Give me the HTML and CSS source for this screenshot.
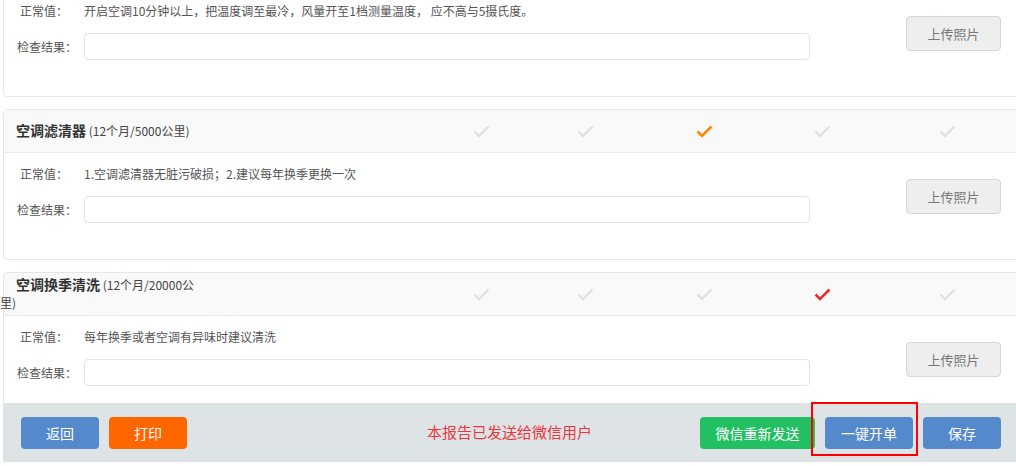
FILE: index.html
```html
<!DOCTYPE html>
<html lang="zh-CN">
<head>
    <meta charset="UTF-8">
    <meta name="viewport" content="width=device-width, initial-scale=1.0">
    <title>检查报告</title>
    <link rel="stylesheet" href="styles.css">
</head>
<body>
    <div class="page">
        <!-- 上一项，标题已滚出屏幕 -->
        <div class="panel panel-first">
            <div class="panel-body">
                <div class="fields">
                    <div class="row">
                        <span class="label label-norm">正常值：</span>
                        <span class="value">开启空调10分钟以上，把温度调至最冷，风量开至1档测量温度， 应不高与5摄氏度。</span>
                    </div>
                    <div class="row row-input">
                        <span class="label">检查结果：</span>
                        <input class="result" type="text">
                    </div>
                </div>
                <button class="upload-btn">上传照片</button>
            </div>
        </div>

        <div class="panel">
            <div class="panel-head">
                <div class="item-title"><b>空调滤清器</b> (12个月/5000公里)</div>
                <div class="checks">
                    <span class="check"><svg viewBox="0 0 17 13"><path d="M1.5 6.5 L6 11 L15.5 1.5"/></svg></span>
                    <span class="check"><svg viewBox="0 0 17 13"><path d="M1.5 6.5 L6 11 L15.5 1.5"/></svg></span>
                    <span class="check check-orange"><svg viewBox="0 0 17 13"><path d="M1.5 6.5 L6 11 L15.5 1.5"/></svg></span>
                    <span class="check"><svg viewBox="0 0 17 13"><path d="M1.5 6.5 L6 11 L15.5 1.5"/></svg></span>
                    <span class="check"><svg viewBox="0 0 17 13"><path d="M1.5 6.5 L6 11 L15.5 1.5"/></svg></span>
                </div>
            </div>
            <div class="panel-body">
                <div class="fields">
                    <div class="row">
                        <span class="label label-norm">正常值：</span>
                        <span class="value">1.空调滤清器无脏污破损；2.建议每年换季更换一次</span>
                    </div>
                    <div class="row row-input">
                        <span class="label">检查结果：</span>
                        <input class="result" type="text">
                    </div>
                </div>
                <button class="upload-btn">上传照片</button>
            </div>
        </div>

        <div class="panel">
            <div class="panel-head">
                <div class="item-title"><b>空调换季清洗</b> (12个月/20000公里)</div>
                <div class="checks">
                    <span class="check"><svg viewBox="0 0 17 13"><path d="M1.5 6.5 L6 11 L15.5 1.5"/></svg></span>
                    <span class="check"><svg viewBox="0 0 17 13"><path d="M1.5 6.5 L6 11 L15.5 1.5"/></svg></span>
                    <span class="check"><svg viewBox="0 0 17 13"><path d="M1.5 6.5 L6 11 L15.5 1.5"/></svg></span>
                    <span class="check check-red"><svg viewBox="0 0 17 13"><path d="M1.5 6.5 L6 11 L15.5 1.5"/></svg></span>
                    <span class="check"><svg viewBox="0 0 17 13"><path d="M1.5 6.5 L6 11 L15.5 1.5"/></svg></span>
                </div>
            </div>
            <div class="panel-body">
                <div class="fields">
                    <div class="row">
                        <span class="label label-norm">正常值：</span>
                        <span class="value">每年换季或者空调有异味时建议清洗</span>
                    </div>
                    <div class="row row-input">
                        <span class="label">检查结果：</span>
                        <input class="result" type="text">
                    </div>
                </div>
                <button class="upload-btn">上传照片</button>
            </div>
        </div>
    </div>

    <div class="footer-bar">
        <button class="btn btn-blue">返回</button>
        <button class="btn btn-orange">打印</button>
        <span class="send-msg">本报告已发送给微信用户</span>
        <div class="footer-right">
            <button class="btn btn-green">微信重新发送</button>
            <span class="mark"><button class="btn btn-blue btn-open">一键开单</button></span>
            <button class="btn btn-blue">保存</button>
        </div>
    </div>
</body>
</html>
```

FILE: styles.css
```css
html, body {
    overflow: hidden;
}

body {
    margin: 0;
    font-family: "Noto Sans CJK SC", "Liberation Sans", sans-serif;
    font-size: 12px;
    color: #555;
    background-color: #ffffff;
}

.page {
    width: 1030px;
    margin-left: 3px;
}

.panel {
    border: 1px solid #e6e6e6;
    border-radius: 4px;
    margin-bottom: 12px;
    background-color: #fff;
}

.panel-first {
    margin-top: -11px;
}

.panel-head {
    display: flex;
    align-items: center;
    height: 42px;
    background-color: #f9f9f9;
    border-bottom: 1px solid #ebebeb;
}

.item-title {
    width: 200px;
    margin-left: -4px;
    margin-top: -2px;
    text-indent: 16px;
    line-height: 18px;
    font-size: 12px;
    color: #444;
}

.item-title b {
    font-size: 14px;
    color: #333;
}

.checks {
    display: grid;
    grid-template-columns: 102px 106px 132px 104px 146px;
    margin-left: 230px;
}

.check {
    display: flex;
    justify-content: center;
}

.check svg {
    width: 17px;
    height: 13px;
    fill: none;
    stroke: #dedede;
    stroke-width: 2;
}

.check-orange svg {
    stroke: #ff8a00;
    stroke-width: 2.6;
}

.check-red svg {
    stroke: #ef2b2b;
    stroke-width: 2.6;
}

.panel-body {
    display: flex;
    align-items: flex-start;
    padding: 11px 0 36px 13px;
}

.row {
    display: flex;
    line-height: 20px;
}

.row-input {
    margin-top: 12px;
    align-items: center;
}

.label {
    width: 67px;
    flex-shrink: 0;
}

.label-norm {
    box-sizing: border-box;
    padding-left: 3px;
}

.result {
    box-sizing: border-box;
    width: 726px;
    height: 27px;
    border: 1px solid #e3e3e3;
    border-radius: 4px;
    outline: none;
}

.upload-btn {
    margin-top: 15px;
    margin-left: 96px;
    width: 95px;
    height: 35px;
    background-color: #eeeeee;
    border: 1px solid #d6d6d6;
    border-radius: 4px;
    color: #777;
    font-family: inherit;
    font-size: 13px;
    cursor: pointer;
}

/* barra inferior fija */
.footer-bar {
    position: fixed;
    left: 3px;
    right: 0;
    bottom: 4px;
    height: 59px;
    box-sizing: border-box;
    display: flex;
    align-items: flex-start;
    padding: 14px 15px 0 18px;
    background-color: #dee3e6;
}

.btn {
    height: 32px;
    min-width: 78px;
    padding: 0 14px;
    border: none;
    border-radius: 4px;
    color: #fff;
    font-family: inherit;
    font-size: 14px;
    cursor: pointer;
}

.btn + .btn {
    margin-left: 10px;
}

.btn-blue {
    background-color: #5489cc;
}

.btn-orange {
    background-color: #ff6600;
}

.btn-green {
    background-color: #22bf63;
    width: 115px;
}

.btn-open {
    width: 88px;
}

.send-msg {
    margin-left: 240px;
    line-height: 30px;
    font-size: 15px;
    color: #e8383d;
}

.footer-right {
    display: flex;
    margin-left: auto;
}

.mark {
    position: relative;
    margin: 0 10px;
}

.mark::after {
    content: "";
    position: absolute;
    left: -14px;
    right: -5px;
    top: -15px;
    bottom: -7px;
    border: 2px solid #ff0000;
    pointer-events: none;
}
```
